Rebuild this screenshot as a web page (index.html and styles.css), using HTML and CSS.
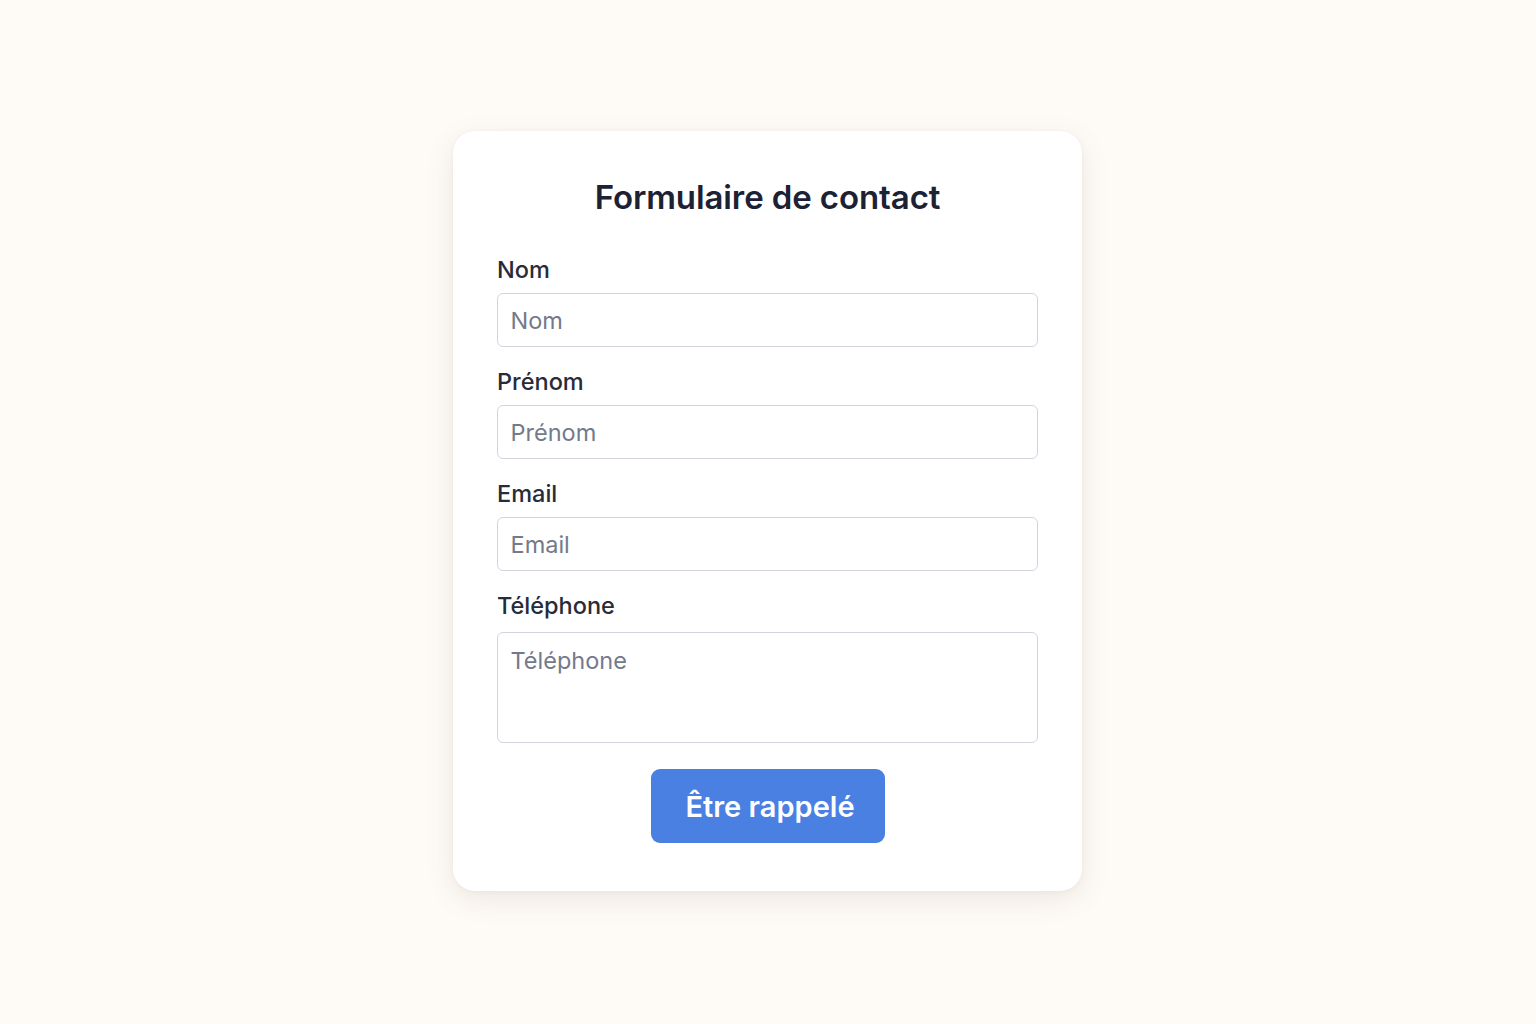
FILE: index.html
```html
<!DOCTYPE html>
<html lang="fr">
<head>
<meta charset="utf-8">
<title>Formulaire de contact</title>
<link rel="stylesheet" href="styles.css">
</head>
<body>
<main class="page">
  <form class="card">
    <h1 class="title">Formulaire de contact</h1>
    <div class="field">
      <label class="label" for="nom">Nom</label>
      <input class="input" id="nom" type="text" placeholder="Nom">
    </div>
    <div class="field">
      <label class="label" for="prenom">Prénom</label>
      <input class="input" id="prenom" type="text" placeholder="Prénom">
    </div>
    <div class="field">
      <label class="label" for="email">Email</label>
      <input class="input" id="email" type="email" placeholder="Email">
    </div>
    <div class="field field-last">
      <label class="label" for="tel">Téléphone</label>
      <textarea class="input textarea" id="tel" placeholder="Téléphone"></textarea>
    </div>
    <div class="actions">
      <button class="button" type="button">Être rappelé</button>
    </div>
  </form>
</main>
</body>
</html>
```
FILE: styles.css
```css
* { box-sizing: border-box; }
html, body { margin: 0; padding: 0; }
body {
  background: #fefaf6;
  font-family: Inter, "Noto Sans", "Liberation Sans", sans-serif;
  color: #1f2433;
}
.page {
  width: 1536px;
  height: 1024px;
  display: flex;
  justify-content: center;
  align-items: flex-start;
  padding-top: 131px;
  padding-right: 1px;
}
.card {
  width: 629px;
  background: #ffffff;
  border-radius: 22px;
  padding: 46px 44px 48px;
  box-shadow: 0 8px 28px rgba(120, 100, 80, 0.12), 0 1px 4px rgba(120, 100, 80, 0.06);
}
.title {
  margin: 0 0 39px;
  text-align: center;
  font-size: 33px;
  line-height: 40px;
  font-weight: 600;
  color: #1c2233;
  letter-spacing: -0.1px;
}
.field {
  display: flex;
  flex-direction: column;
  margin-bottom: 21px;
}
.field-last { margin-top: 4px; margin-bottom: 26px; }
.label {
  font-size: 23.5px;
  line-height: 28px;
  font-weight: 500;
  color: #262c3a;
  margin-bottom: 9px;
}
.field-last .label { margin-bottom: 12px; }
.input {
  width: 100%;
  height: 54px;
  border: 1.5px solid #d3d5de;
  border-radius: 6px;
  padding: 0 12.5px;
  font-family: inherit;
  font-size: 23.5px;
  color: #1f2433;
  background: #fff;
  outline: none;
}
.input::placeholder { color: #737a8a; }
.textarea {
  height: 111px;
  padding: 13px 12.5px;
  line-height: 30px;
  resize: none;
  display: block;
}
.actions {
  display: flex;
  justify-content: center;
}
.button {
  width: 234px;
  height: 74px;
  border: none;
  border-radius: 9px;
  padding: 0 0 0 5px;
  background: #4a80e2;
  color: #ffffff;
  font-family: inherit;
  font-size: 29px;
  font-weight: 600;
  cursor: pointer;
}
```
